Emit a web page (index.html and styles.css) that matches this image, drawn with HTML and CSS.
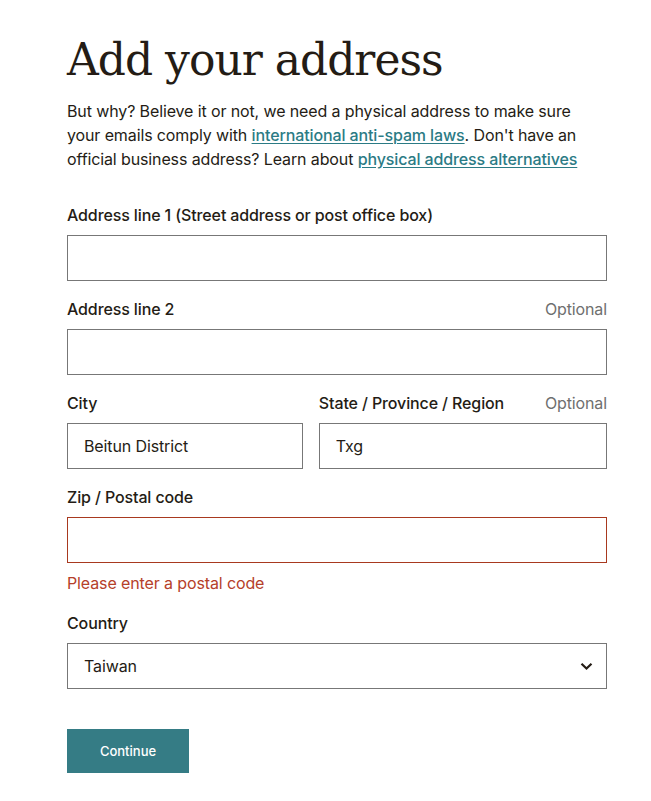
FILE: index.html
```html
<!DOCTYPE html>
<html lang="en">
<head>
<meta charset="utf-8">
<title>Add your address</title>
<link rel="stylesheet" href="styles.css">
</head>
<body>
<main class="page">
  <h1 class="title">Add your address</h1>
  <p class="intro">But why? Believe it or not, we need a physical address to make sure your emails comply with <a href="#" class="link">international anti-spam laws</a>. Don't have an official business address? Learn about <a href="#" class="link">physical address alternatives</a></p>

  <form class="form">
    <div class="field">
      <div class="label-row"><label class="label">Address line 1 (Street address or post office box)</label></div>
      <input class="input" type="text">
    </div>
    <div class="field">
      <div class="label-row"><label class="label">Address line 2</label><span class="optional">Optional</span></div>
      <input class="input" type="text">
    </div>
    <div class="row">
      <div class="field">
        <div class="label-row"><label class="label">City</label></div>
        <input class="input" type="text" value="Beitun District">
      </div>
      <div class="field">
        <div class="label-row"><label class="label">State / Province / Region</label><span class="optional">Optional</span></div>
        <input class="input" type="text" value="Txg">
      </div>
    </div>
    <div class="field field-error">
      <div class="label-row"><label class="label">Zip / Postal code</label></div>
      <input class="input input-error" type="text">
      <div class="error">Please enter a postal code</div>
    </div>
    <div class="field">
      <div class="label-row"><label class="label">Country</label></div>
      <div class="select">
        <span class="select-value">Taiwan</span>
        <svg class="chevron" width="13" height="9" viewBox="0 0 13 9"><path d="M1.5 1.8 L6.5 6.6 L11.5 1.8" fill="none" stroke="#241c15" stroke-width="2.2"/></svg>
      </div>
    </div>
    <button class="button" type="button">Continue</button>
  </form>
</main>
</body>
</html>
```

FILE: styles.css
```css
* { box-sizing: border-box; }
body {
  margin: 0;
  background: #fff;
  color: #241c15;
  font-family: "Inter", "Liberation Sans", sans-serif;
  letter-spacing: -0.12px;
}
.page {
  width: 540px;
  margin-left: 67px;
  padding-top: 30px;
}
.title {
  margin: 0;
  font-family: "DejaVu Serif", "Liberation Serif", serif;
  font-weight: 400;
  font-size: 44px;
  line-height: 60px;
  letter-spacing: -1px;
}
.intro {
  margin: 9px 0 0;
  font-size: 16px;
  line-height: 24px;
}
.link {
  color: #2b7b85;
  font-weight: 500;
  text-decoration: underline;
  text-underline-offset: 2px;
}
.form {
  display: flex;
  flex-direction: column;
  margin-top: 32px;
}
.field {
  display: flex;
  flex-direction: column;
  gap: 8px;
  margin-bottom: 16px;
}
.row {
  display: grid;
  grid-template-columns: 9fr 11fr;
  column-gap: 16px;
}
.label-row {
  display: flex;
  justify-content: space-between;
  align-items: baseline;
  height: 24px;
  line-height: 24px;
}
.label {
  font-size: 16px;
  font-weight: 500;
}
.optional {
  font-size: 16px;
  color: #6f6f6f;
}
.input, .select {
  height: 46px;
  width: 100%;
  border: 1px solid #777;
  border-radius: 0;
  padding: 0 16px;
  font-family: inherit;
  font-size: 16px;
  letter-spacing: -0.12px;
  color: #241c15;
  background: #fff;
}
.input-error { border-color: #a8391f; }
.error {
  line-height: 24px;
  font-size: 16px;
  color: #b5402a;
}
.select {
  display: flex;
  align-items: center;
  justify-content: space-between;
}
.chevron { margin-right: -3px; }
.button {
  align-self: flex-start;
  margin-top: 24px;
  width: 122px;
  height: 44px;
  border: 0;
  background: #357c85;
  color: #fff;
  font-family: inherit;
  font-size: 13px;
  font-weight: 500;
  letter-spacing: 0;
}
```
